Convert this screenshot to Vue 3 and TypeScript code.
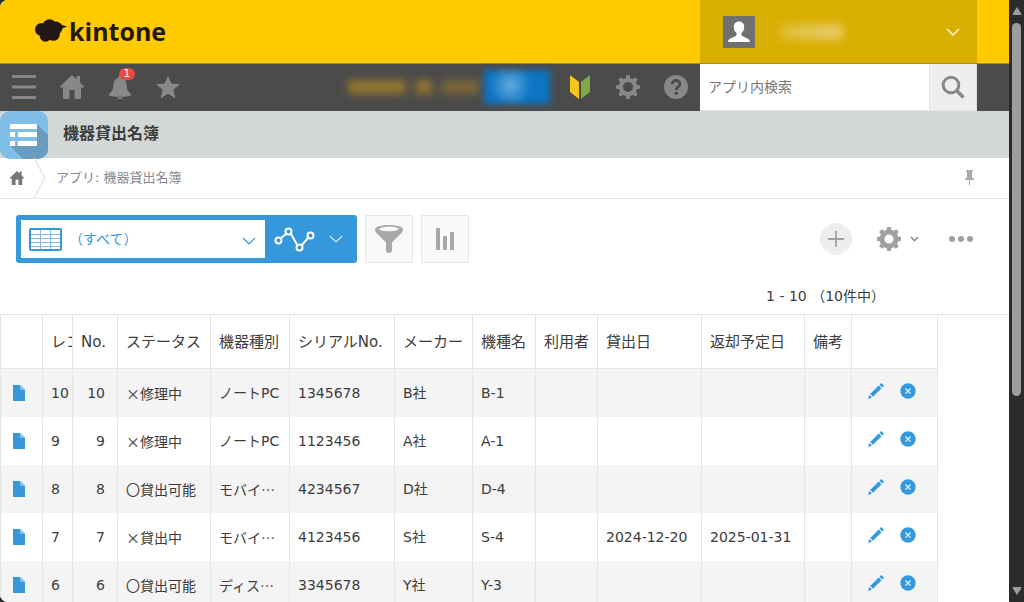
<script setup lang="ts">
import { ref } from 'vue'

interface RecordRow {
  id: number
  no: number
  status: string
  kind: string
  serial: string
  maker: string
  model: string
  user: string
  lent: string
  due: string
  note: string
}

const keyword = ref('')
const view = ref('all')

const columns: { key: string; label: string }[] = [
  { key: 'open', label: '' },
  { key: 'id', label: 'レコ' },
  { key: 'no', label: 'No.' },
  { key: 'status', label: 'ステータス' },
  { key: 'kind', label: '機器種別' },
  { key: 'serial', label: 'シリアルNo.' },
  { key: 'maker', label: 'メーカー' },
  { key: 'model', label: '機種名' },
  { key: 'user', label: '利用者' },
  { key: 'lent', label: '貸出日' },
  { key: 'due', label: '返却予定日' },
  { key: 'note', label: '備考' },
  { key: 'actions', label: '' },
]

const rows: RecordRow[] = [
  { id: 10, no: 10, status: '×修理中', kind: 'ノートPC', serial: '1345678', maker: 'B社', model: 'B-1', user: '', lent: '', due: '', note: '' },
  { id: 9, no: 9, status: '×修理中', kind: 'ノートPC', serial: '1123456', maker: 'A社', model: 'A-1', user: '', lent: '', due: '', note: '' },
  { id: 8, no: 8, status: '〇貸出可能', kind: 'モバイ…', serial: '4234567', maker: 'D社', model: 'D-4', user: '', lent: '', due: '', note: '' },
  { id: 7, no: 7, status: '×貸出中', kind: 'モバイ…', serial: '4123456', maker: 'S社', model: 'S-4', user: '', lent: '2024-12-20', due: '2025-01-31', note: '' },
  { id: 6, no: 6, status: '〇貸出可能', kind: 'ディス…', serial: '3345678', maker: 'Y社', model: 'Y-3', user: '', lent: '', due: '', note: '' },
]

const gearTeeth = [0, 45, 90, 135, 180, 225, 270, 315]
</script>

<template>
  <div class="window">
    <div class="page">
      <header>
        <div class="brand-bar">
          <a class="logo" href="#">
            <svg width="32" height="24" viewBox="0 0 32 24" aria-hidden="true">
              <g fill="#231815">
                <circle cx="14.500" cy="7" r="6.800" />
                <circle cx="6.500" cy="10.500" r="6.500" />
                <circle cx="10.500" cy="17" r="5.800" />
                <circle cx="18.500" cy="15.500" r="6.300" />
                <circle cx="21" cy="9" r="6.500" />
                <path d="M22 4C26 5.500 28 6.600 32 7.200C30 8.700 28 9 24 10Z" />
              </g>
            </svg>
            <span>kintone</span>
          </a>
          <button class="account" type="button" aria-label="アカウント">
            <svg class="avatar" width="32" height="32" viewBox="0 0 32 32" aria-hidden="true">
              <rect width="32" height="32" fill="#707070" />
              <path fill="#fff" d="M16 5.500C19.300 5.500 21.200 7.800 21.200 11C21.200 13.600 20.200 15.600 18.500 16.900V19C19 21.300 27 21.500 27 26H5C5 21.500 13 21.300 13.500 19V16.900C11.800 15.600 10.800 13.600 10.800 11C10.800 7.800 12.700 5.500 16 5.500Z" />
            </svg>
            <span class="account-name"></span>
            <svg width="14" height="8" viewBox="0 0 14 8" aria-hidden="true"><path d="M1 1L7 7L13 1" fill="none" stroke="#fff3c4" stroke-width="1.600" /></svg>
          </button>
        </div>

        <nav class="tool-bar">
          <button class="nav-btn" type="button" aria-label="メニュー">
            <svg width="24" height="24" viewBox="0 0 24 24"><path d="M0 1.500H24M0 12H24M0 22.500H24" stroke="#888" stroke-width="3" /></svg>
          </button>
          <button class="nav-btn" type="button" aria-label="ポータル">
            <svg width="24" height="24" viewBox="0 0 24 24"><path fill="#888" d="M12 0L16.500 4.200V1H20V7.500L24 11.500V12.500H21V24H14.500V15H9.500V24H3V12.500H0V11.500Z" /></svg>
          </button>
          <button class="nav-btn" type="button" aria-label="通知">
            <svg width="24" height="24" viewBox="0 0 24 24"><path fill="#888" d="M12 1C13.500 1 14.300 2 14.500 3.200C18 4.500 18.500 8 18.800 11.500C19 15.500 20.500 17 23 19V20.500C18 22.200 6 22.200 1 20.500V19C3.500 17 5 15.500 5.200 11.500C5.500 8 6 4.500 9.500 3.200C9.700 2 10.500 1 12 1ZM9.500 22.500H14.500C14.200 24.500 9.800 24.500 9.500 22.500Z" /></svg>
            <span class="badge">1</span>
          </button>
          <button class="nav-btn" type="button" aria-label="ブックマーク">
            <svg width="24" height="24" viewBox="0 0 24 24"><path fill="#888" d="M12 .5L15.300 8.600L24 9.200L17.300 14.800L19.500 23.500L12 18.800L4.500 23.500L6.700 14.800L0 9.200L8.700 8.600Z" /></svg>
          </button>
          <div class="spacer"></div>
          <a class="notice" href="#" aria-label="お知らせ"><span class="smudge long"></span><span class="smudge dot"></span><span class="smudge faint"></span></a>
          <button class="purchase" type="button" aria-label="購入"></button>
          <button class="nav-btn" type="button" aria-label="はじめに">
            <svg width="22" height="24" viewBox="0 0 22 24"><path fill="#f5c518" d="M1 1.500Q1 0 2.300 1L10 7V24L1 17Z" /><path fill="#7fa84b" d="M21 1.500Q21 0 19.700 1L12 7V24L21 17Z" /></svg>
          </button>
          <button class="nav-btn" type="button" aria-label="設定">
            <svg width="24" height="24" viewBox="-12 -12 24 24"><g fill="#888"><rect v-for="a in gearTeeth" :key="a" x="-2" y="-12" width="4" height="6" rx="1" :transform="`rotate(${a})`" /></g><circle r="7.200" fill="none" stroke="#888" stroke-width="4.200" /></svg>
          </button>
          <button class="nav-btn" type="button" aria-label="ヘルプ">
            <svg width="24" height="24" viewBox="0 0 24 24"><circle cx="12" cy="12" r="12" fill="#888" /><path d="M8 9.300C8 4.300 16 4.300 16 9C16 12 12.200 11.700 12.200 15" fill="none" stroke="#4b4b4b" stroke-width="2.800" /><circle cx="12.200" cy="18.300" r="1.700" fill="#4b4b4b" /></svg>
          </button>
          <form class="search" @submit.prevent>
            <input v-model="keyword" type="text" placeholder="アプリ内検索" aria-label="アプリ内検索" />
            <button type="submit" aria-label="検索">
              <svg width="24" height="24" viewBox="0 0 24 24"><circle cx="10" cy="10" r="7.800" fill="none" stroke="#888" stroke-width="3" /><path d="M15.500 15.500L22.500 22.500" stroke="#888" stroke-width="3.600" /></svg>
            </button>
          </form>
        </nav>
      </header>

      <div class="title-bar">
        <svg width="48" height="48" viewBox="0 0 48 48" aria-hidden="true">
          <defs><clipPath id="tile"><rect width="48" height="48" rx="10" /></clipPath></defs>
          <g clip-path="url(#tile)">
            <rect width="48" height="48" fill="#7fbfe7" />
            <path fill="#6a9cc0" d="M37 13L48 24V48H23L10 35Z" />
          </g>
          <path fill="#7fbfe7" d="M10 13H37V35H10Z" />
          <path fill="#fff" d="M10 13H37V18H10ZM10 21H15V26H10ZM18 21H37V26H18ZM10 30H15V35H10ZM18 30H37V35H18Z" />
        </svg>
        <h1>機器貸出名簿</h1>
      </div>

      <nav class="crumbs" aria-label="パンくず">
        <a class="crumb-home" href="#" aria-label="ポータル">
          <svg width="14" height="14" viewBox="0 0 24 24"><path fill="#777" d="M12 0L16.500 4.200V1H20V7.500L24 11.500V13H21V24H14.500V15H9.500V24H3V13H0V11.500Z" /></svg>
        </a>
        <svg width="13" height="40" viewBox="0 0 13 40" aria-hidden="true"><path d="M1 0L12 20L1 40" fill="none" stroke="#e3e7e8" stroke-width="1.500" /></svg>
        <a class="crumb" href="#">アプリ: 機器貸出名簿</a>
        <button class="pin" type="button" aria-label="固定">
          <svg width="9" height="16" viewBox="0 0 9 16"><path fill="#aaa" d="M1 0H8V1.500H7V7L9 9V10H5V15.500H4V10H0V9L2 7V1.500H1Z" /></svg>
        </button>
      </nav>

      <main>
        <div class="controls">
          <div class="view-box">
            <div class="view-select">
              <svg class="grid-icon" width="33" height="23" viewBox="0 0 33 23" aria-hidden="true">
                <path d="M2 6.500H31M2 10.500H31M2 14.500H31M2 18.500H31M11.500 2V21M21.500 2V21" stroke="#7fbce8" />
                <rect x="1" y="1" width="31" height="21" rx="1" fill="none" stroke="#3498db" stroke-width="2" />
              </svg>
              <select v-model="view" aria-label="一覧">
                <option value="all">（すべて）</option>
              </select>
              <svg class="select-arrow" width="14" height="8" viewBox="0 0 14 8" aria-hidden="true"><path d="M1 1L7 7L13 1" fill="none" stroke="#3498db" stroke-width="1.200" /></svg>
            </div>
            <button class="graph-btn" type="button" aria-label="グラフ">
              <svg width="41" height="25" viewBox="0 0 41 25"><g fill="none" stroke="#fff" stroke-width="2"><path d="M7 11L12 7M17 7L23 17.500M28 18L34 11" /><circle cx="4.500" cy="13.500" r="3" /><circle cx="14.500" cy="4.500" r="3" /><circle cx="25.500" cy="20.500" r="3" /><circle cx="36.500" cy="8.500" r="3" /></g></svg>
              <svg width="14" height="8" viewBox="0 0 14 8"><path d="M1 1L7 7L13 1" fill="none" stroke="#d5ebf9" stroke-width="1.200" /></svg>
            </button>
          </div>
          <button class="square" type="button" aria-label="絞り込む">
            <svg width="28" height="28" viewBox="0 0 28 28"><path fill="#a8a8a8" fill-rule="evenodd" d="M0 4.500C0 -1.500 28 -1.500 28 4.500C28 8 24.500 9 17 17.500V26C17 28.500 11 28.500 11 26V17.500C3.500 9 0 8 0 4.500ZM4 4C5 7 23 7 24 4C22 1 6 1 4 4Z" /></svg>
          </button>
          <button class="square" type="button" aria-label="集計">
            <svg width="20" height="24" viewBox="0 0 20 24"><path fill="#a8a8a8" d="M1 1H5V23H1ZM8 9H12V23H8ZM15 5H19V23H15Z" /></svg>
          </button>
          <div class="spacer"></div>
          <button class="add" type="button" aria-label="レコードを追加">
            <svg width="16" height="16" viewBox="0 0 16 16"><path d="M8 0V16M0 8H16" stroke="#a0a0a0" stroke-width="1.800" /></svg>
          </button>
          <button class="gear" type="button" aria-label="アプリを設定">
            <svg width="24" height="24" viewBox="-12 -12 24 24"><g fill="#a0a0a0"><rect v-for="a in gearTeeth" :key="a" x="-2.200" y="-12" width="4.400" height="6" rx="1" :transform="`rotate(${a})`" /></g><circle r="7" fill="none" stroke="#a0a0a0" stroke-width="5" /></svg>
            <svg width="9" height="6" viewBox="0 0 9 6"><path d="M1 1L4.500 4.700L8 1" fill="none" stroke="#888" stroke-width="1.600" /></svg>
          </button>
          <button class="more" type="button" aria-label="オプション">
            <svg width="24" height="6" viewBox="0 0 24 6"><g fill="#a0a0a0"><circle cx="3" cy="3" r="3" /><circle cx="12" cy="3" r="3" /><circle cx="21" cy="3" r="3" /></g></svg>
          </button>
        </div>

        <p class="pager">1 - 10 （10件中）</p>

        <div class="table-wrap">
          <table>
            <colgroup>
              <col v-for="c in columns" :key="c.key" :class="'w-' + c.key" />
            </colgroup>
            <thead>
              <tr>
                <th v-for="c in columns" :key="c.key" scope="col">{{ c.label }}</th>
              </tr>
            </thead>
            <tbody>
              <tr v-for="r in rows" :key="r.id">
                <td class="open">
                  <a href="#" aria-label="詳細">
                    <svg width="12" height="16" viewBox="0 0 12 16"><path fill="#3498db" d="M0 0H7.500V4.500H12V16H0Z" /><path fill="#85c1eb" d="M7.500 0L12 4.500H7.500Z" /></svg>
                  </a>
                </td>
                <td>{{ r.id }}</td>
                <td class="num">{{ r.no }}</td>
                <td class="cjk">{{ r.status }}</td>
                <td :class="{ cjk: r.kind.endsWith('…') }">{{ r.kind }}</td>
                <td>{{ r.serial }}</td>
                <td>{{ r.maker }}</td>
                <td>{{ r.model }}</td>
                <td>{{ r.user }}</td>
                <td>{{ r.lent }}</td>
                <td>{{ r.due }}</td>
                <td>{{ r.note }}</td>
                <td class="actions">
                  <div>
                    <button type="button" aria-label="編集">
                      <svg width="16" height="16" viewBox="0 0 16 16"><path fill="#3498db" d="M13.200 0L16 2.800L14.300 4.500L11.500 1.700ZM10.700 2.500L13.500 5.300L5 13.800L2.200 11ZM1.400 11.900L4.100 14.600L0 16Z" /></svg>
                    </button>
                    <button type="button" aria-label="削除">
                      <svg width="16" height="16" viewBox="0 0 16 16"><circle cx="8" cy="8" r="7.700" fill="#3498db" /><path d="M5.500 5.500L10.500 10.500M10.500 5.500L5.500 10.500" stroke="#d5ebf9" stroke-width="1.400" /></svg>
                    </button>
                  </div>
                </td>
              </tr>
            </tbody>
          </table>
        </div>
      </main>
    </div>

    <div class="scrollbar" aria-hidden="true">
      <svg width="10" height="8" viewBox="0 0 10 8"><path fill="#9d9d9d" d="M5 0L9.500 7Q9.500 8 8.500 8H1.500Q.5 8 .5 7Z" /></svg>
      <div class="track"><div class="thumb"></div></div>
      <svg width="10" height="8" viewBox="0 0 10 8"><path fill="#9d9d9d" d="M5 8L9.500 1Q9.500 0 8.500 0H1.500Q.5 0 .5 1Z" /></svg>
    </div>
  </div>
</template>

<style>
body {
  margin: 0;
  background: #2b2b2b;
}
</style>

<style scoped>
.window {
  display: flex;
  height: 100vh;
  overflow: hidden;
  background: #2b2b2b;
  color: #3c3c3c;
  font-family: "DejaVu Sans", "Noto Sans CJK JP", sans-serif;
  font-size: 14px;
  line-height: 20px;
}
.window * {
  box-sizing: border-box;
}
.page {
  flex: 1;
  min-width: 0;
  overflow: hidden;
  background: #fff;
  border-radius: 8px 0 0 8px;
}
svg {
  display: block;
  flex: none;
}
button {
  display: flex;
  align-items: center;
  justify-content: center;
  padding: 0;
  border: 0;
  background: none;
  font: inherit;
  color: inherit;
  cursor: pointer;
}
a {
  color: inherit;
  text-decoration: none;
}
.spacer {
  flex: 1;
}

.brand-bar {
  display: flex;
  justify-content: space-between;
  height: 64px;
  padding-right: 32px;
  background: #ffcb00;
  border-bottom: 1px solid #a88d1a;
}
.logo {
  display: flex;
  align-items: center;
  gap: 2px;
  padding: 0 0 2px 35px;
  color: #231815;
  font: bold 25px/32px "Open Sans", "Noto Sans", sans-serif;
}
.account {
  width: 277px;
  padding: 0 17px 0 23px;
  background: #d9af00;
}
.account-name {
  width: 64px;
  height: 16px;
  margin: 0 auto 0 24px;
  border-radius: 6px;
  background: linear-gradient(90deg, #dfba2e, #e4c654 50%, #e8cd68);
  filter: blur(4px);
}

.tool-bar {
  display: flex;
  height: 47px;
  padding-right: 32px;
  background: #4b4b4b;
}
.nav-btn {
  position: relative;
  width: 48px;
  padding-bottom: 2px;
}
.badge {
  position: absolute;
  top: 4px;
  left: 23px;
  width: 16px;
  height: 12px;
  border-radius: 6px;
  background: #e74c3c;
  color: #fff;
  font-size: 10px;
  line-height: 12px;
}
.notice {
  display: flex;
  align-items: center;
  gap: 10px;
  width: 132px;
  padding-bottom: 2px;
  filter: blur(4px);
}
.smudge {
  height: 14px;
  background: #94752f;
}
.long {
  width: 58px;
}
.dot {
  width: 16px;
}
.faint {
  width: 38px;
  background: #7c663a;
}
.purchase {
  width: 66px;
  height: 34px;
  margin: 6px 6px 0 4px;
  background: radial-gradient(circle at 40% 45%, #6cb0e0 0, #3d93d2 22%, #0b74c4 48%);
  filter: blur(3px);
}
.search {
  display: flex;
  width: 277px;
  border: 1px solid #dfe3e3;
  border-width: 0 1px 1px 0;
  background: #fff;
}
.search input {
  flex: 1;
  min-width: 0;
  padding: 0 8px;
  border: 0;
  background: none;
  font: inherit;
  outline: 0;
}
.search input::placeholder {
  color: #777;
  opacity: 1;
}
.search button {
  width: 47px;
  border-left: 1px solid #e0e4e4;
  background: #eee;
}

.title-bar {
  display: flex;
  gap: 15px;
  height: 47px;
  background: #d4d7d7;
}
h1 {
  margin: 0;
  font-size: 16px;
  line-height: 46px;
}

.crumbs {
  display: flex;
  align-items: center;
  height: 41px;
  border-bottom: 1px solid #e3e7e8;
  color: #888;
  font-size: 13px;
}
.crumb-home {
  padding: 0 9px 0 10px;
}
.crumb {
  margin-left: 10px;
}
.pin {
  margin: 0 35px 0 auto;
}

.controls {
  display: flex;
  align-items: center;
  gap: 8px;
  padding: 16px 36px 0 16px;
}
.view-box {
  display: flex;
  width: 341px;
  height: 48px;
  padding: 5px;
  border-radius: 3px;
  background: #3498db;
}
.view-select {
  position: relative;
  display: flex;
  width: 244px;
  background: #fff;
}
.view-select select {
  flex: 1;
  min-width: 0;
  padding: 0 40px 0 48px;
  border: 0;
  background: none;
  color: #3498db;
  font: inherit;
  appearance: none;
  outline: 0;
}
.grid-icon {
  position: absolute;
  top: 8px;
  left: 8px;
}
.select-arrow {
  position: absolute;
  top: 17px;
  right: 9px;
}
.graph-btn {
  flex: 1;
  gap: 14px;
}
.square {
  width: 48px;
  height: 48px;
  border: 1px solid #e3e7e8;
  background: #f7f9fa;
}
.add {
  width: 32px;
  height: 32px;
  border-radius: 50%;
  background: #eee;
}
.gear {
  gap: 9px;
  margin-left: 17px;
}
.more {
  margin-left: 22px;
}

.pager {
  margin: 23px 124px 8px 0;
  text-align: right;
}

.table-wrap {
  border-top: 1px solid #e3e7e8;
}
table {
  width: 938px;
  table-layout: fixed;
  border-collapse: separate;
  border-spacing: 0;
}
th,
td {
  height: 48px;
  padding: 0 0 0 8px;
  overflow: hidden;
  border-right: 1px solid #e3e7e8;
  text-align: left;
  white-space: nowrap;
}
th {
  height: 54px;
  border-bottom: 1px solid #e3e7e8;
  font-size: 15px;
  font-weight: normal;
}
th:first-child,
td:first-child {
  border-left: 1px solid #e3e7e8;
}
tbody tr:nth-child(odd) {
  background: #f4f4f4;
}
.cjk {
  font-family: "Noto Sans CJK JP", "DejaVu Sans", sans-serif;
}
td.open {
  padding-left: 12px;
}
td.num {
  padding-right: 12px;
  text-align: right;
}
td.actions {
  padding: 0 0 4px 16px;
}
.actions div {
  display: flex;
  gap: 16px;
}
.w-open { width: 43px; }
.w-id { width: 30px; }
.w-no { width: 45px; }
.w-status { width: 93px; }
.w-kind { width: 79px; }
.w-serial { width: 105px; }
.w-maker { width: 78px; }
.w-model { width: 63px; }
.w-user { width: 62px; }
.w-lent { width: 104px; }
.w-due { width: 103px; }
.w-note { width: 47px; }
.w-actions { width: 86px; }

.scrollbar {
  display: flex;
  flex-direction: column;
  align-items: center;
  gap: 8px;
  width: 15px;
  padding: 7px 0;
}
.track {
  flex: 1;
}
.thumb {
  width: 9px;
  height: 67%;
  border-radius: 5px;
  background: #9d9d9d;
}
</style>
